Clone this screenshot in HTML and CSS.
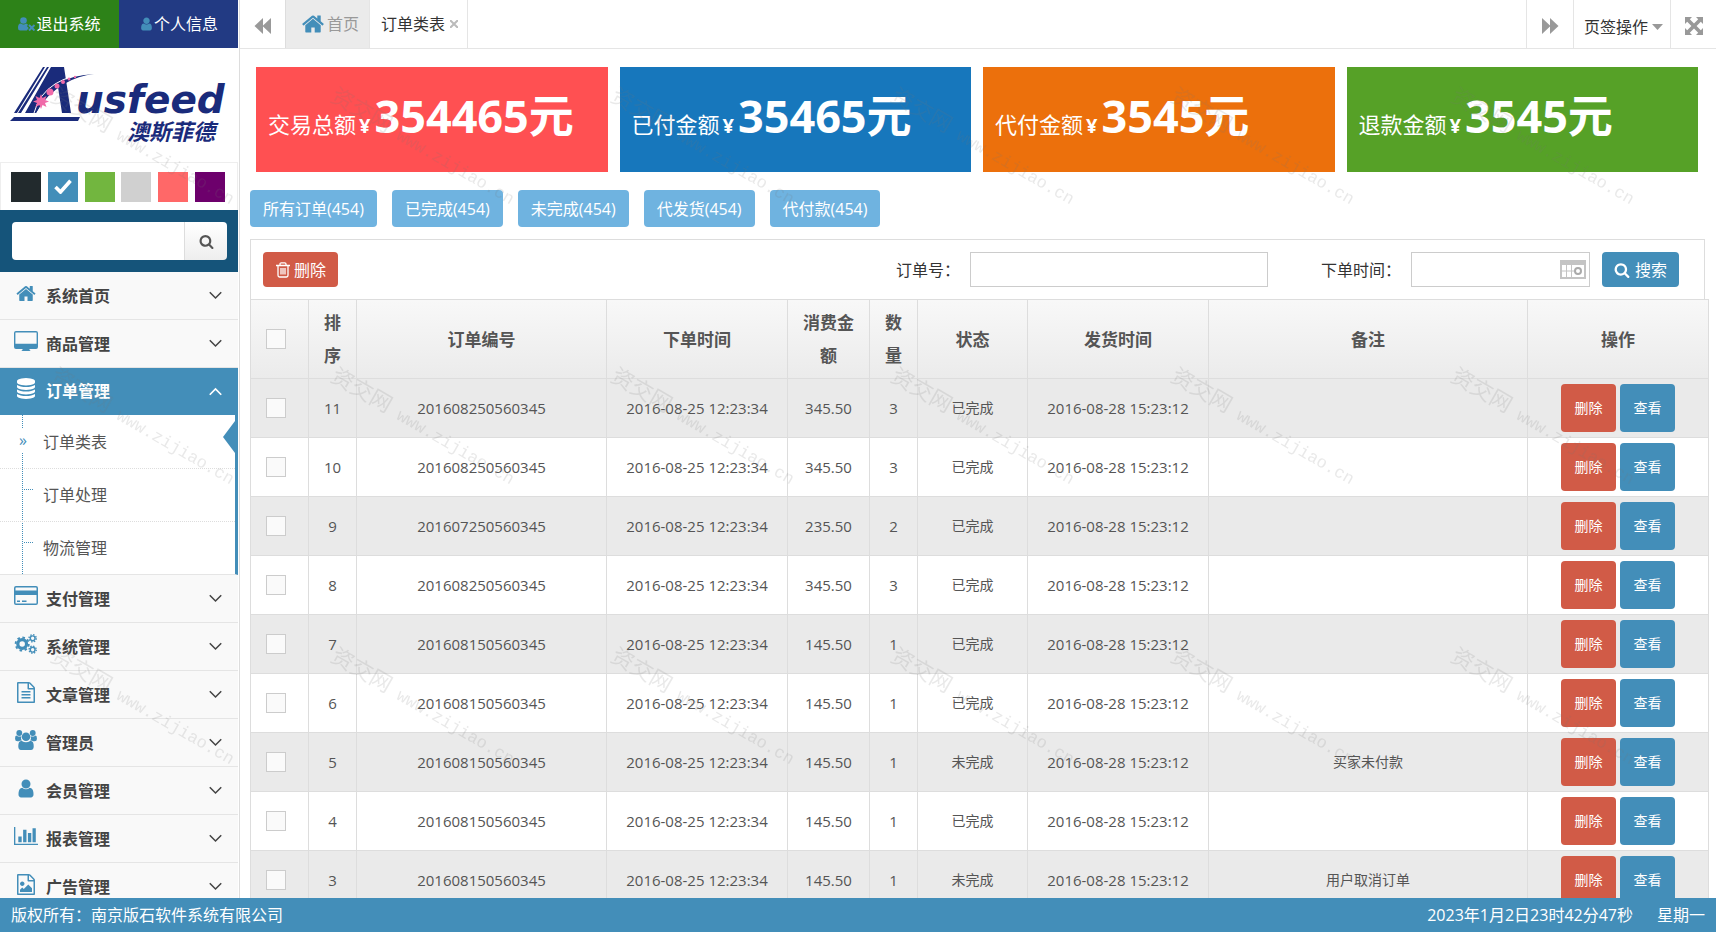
FILE: index.html
```html
<!DOCTYPE html>
<html lang="zh-CN">
<head>
<meta charset="utf-8">
<title>订单类表</title>
<link rel="stylesheet" href="styles.css">
</head>
<body>
<svg class="defs" aria-hidden="true">
<symbol id="home" viewBox="0 0 1792 1792"><path d="M1472 992v480q0 26-19 45t-45 19h-384v-384h-256v384h-384q-26 0-45-19t-19-45v-480q0-1 .5-3t.5-3l575-474 575 474q1 2 1 6zm223-69l-62 74q-8 9-21 11h-3q-13 0-21-7l-692-577-692 577q-12 8-24 7-13-2-21-11l-62-74q-8-10-7-23.5t11-21.5l719-599q32-26 76-26t76 26l244 204v-195q0-14 9-23t23-9h192q14 0 23 9t9 23v408l219 182q10 8 11 21.5t-7 23.5z"/></symbol>
<symbol id="search" viewBox="0 0 1792 1792"><path d="M1216 832q0-185-131.5-316.5t-316.5-131.5-316.5 131.5-131.5 316.5 131.5 316.5 316.5 131.5 316.5-131.5 131.5-316.5zm512 832q0 52-38 90t-90 38q-54 0-90-38l-343-342q-179 124-399 124-143 0-273.5-55.5t-225-150-150-225-55.5-273.5 55.5-273.5 150-225 225-150 273.5-55.5 273.5 55.5 225 150 150 225 55.5 273.5q0 220-124 399l343 343q37 37 37 90z"/></symbol>
<symbol id="user" viewBox="0 0 1792 1792"><path d="M1536 1399q0 109-62.5 187t-150.5 78h-854q-88 0-150.5-78t-62.5-187q0-85 8.5-160.5t31.5-152 58.5-131 94-89 134.5-34.5q131 128 313 128t313-128q76 0 134.5 34.5t94 89 58.5 131 31.5 152 8.5 160.5zm-256-887q0 159-112.5 271.5t-271.5 112.5-271.5-112.5-112.5-271.5 112.5-271.5 271.5-112.5 271.5 112.5 112.5 271.5z"/></symbol>
<symbol id="user-x" viewBox="0 0 18 14"><circle cx="5.500" cy="3.500" r="3.300"/><path d="M0 11q0-5 3-4.500 2.500 2 5 0 1.500 0 2 1.500L8.800 9l2 2-2 2.500H2.200Q0 13.500 0 11z"/><path d="M11 8l5.500 5.500M16.500 8L11 13.500" fill="none" stroke="currentColor" stroke-width="2"/></symbol>
<symbol id="database" viewBox="0 0 1792 1792"><path d="M896 768q237 0 443-43t325-127v170q0 69-103 128t-280 93.500-385 34.500-385-34.500-280-93.500-103-128v-170q119 84 325 127t443 43zm0 768q237 0 443-43t325-127v170q0 69-103 128t-280 93.500-385 34.500-385-34.500-280-93.500-103-128v-170q119 84 325 127t443 43zm0-384q237 0 443-43t325-127v170q0 69-103 128t-280 93.500-385 34.500-385-34.500-280-93.500-103-128v-170q119 84 325 127t443 43zm0-1152q208 0 385 34.500t280 93.500 103 128v128q0 69-103 128t-280 93.500-385 34.500-385-34.500-280-93.500-103-128v-128q0-69 103-128t280-93.500 385-34.500z"/></symbol>
<symbol id="doc" viewBox="0 0 1792 1792"><path d="M1596 380q28 28 48 76t20 88v1152q0 40-28 68t-68 28h-1344q-40 0-68-28t-28-68v-1600q0-40 28-68t68-28h896q40 0 88 20t76 48zm-444-244v376h376q-10-29-22-41l-313-313q-12-12-41-22zm384 1528v-1024h-416q-40 0-68-28t-28-68v-416h-768v1536h1280zm-1024-864q0-14 9-23t23-9h704q14 0 23 9t9 23v64q0 14-9 23t-23 9h-704q-14 0-23-9t-9-23v-64zm736 224q14 0 23 9t9 23v64q0 14-9 23t-23 9h-704q-14 0-23-9t-9-23v-64q0-14 9-23t23-9h704zm0 256q14 0 23 9t9 23v64q0 14-9 23t-23 9h-704q-14 0-23-9t-9-23v-64q0-14 9-23t23-9h704z"/></symbol>
<symbol id="picture" viewBox="0 0 1792 1792"><path d="M1596 380q28 28 48 76t20 88v1152q0 40-28 68t-68 28h-1344q-40 0-68-28t-28-68v-1600q0-40 28-68t68-28h896q40 0 88 20t76 48zm-444-244v376h376q-10-29-22-41l-313-313q-12-12-41-22zm384 1528v-1024h-416q-40 0-68-28t-28-68v-416h-768v1536h1280zm-128-448v320h-1024v-192l192-192 128 128 384-384zm-832-192q-80 0-136-56t-56-136 56-136 136-56 136 56 56 136-56 136-136 56z"/></symbol>
<symbol id="desktop" viewBox="0 0 24 20"><path fill-rule="evenodd" d="M2 0h20a2 2 0 0 1 2 2v14a2 2 0 0 1-2 2h-6.500v1q1 .3 1 1h-9q0-.7 1-1v-1H2a2 2 0 0 1-2-2V2a2 2 0 0 1 2-2zM1.400 1.800v11h21.200v-11l-.4-.4H1.800z"/></symbol>
<symbol id="card" viewBox="0 0 24 20"><path fill-rule="evenodd" d="M2 0h20a2 2 0 0 1 2 2v15a2 2 0 0 1-2 2H2a2 2 0 0 1-2-2V2a2 2 0 0 1 2-2zm0 1.500q-.5 0-.5.5v2.500h21V2q0-.5-.5-.5zM1.500 9v8q0 .5.500.5h20q.5 0 .5-.5V9zM3 14.500h3V16H3zm5 0h4.500V16H8z"/></symbol>
<symbol id="cogs" viewBox="0 0 24 21"><g fill="none" stroke="currentColor"><circle cx="8" cy="10.500" r="4.600" stroke-width="3.400"/><circle cx="8" cy="10.500" r="6.900" stroke-width="2" stroke-dasharray="2.700 2.719"/><circle cx="19" cy="4.500" r="2.500" stroke-width="1.500"/><circle cx="19" cy="4.500" r="3.800" stroke-width="1.400" stroke-dasharray="1.500 1.484"/><circle cx="19" cy="16.500" r="2.500" stroke-width="1.500"/><circle cx="19" cy="16.500" r="3.800" stroke-width="1.400" stroke-dasharray="1.500 1.484"/></g></symbol>
<symbol id="group" viewBox="0 0 24 22"><circle cx="4.600" cy="3.300" r="3.200"/><circle cx="19.400" cy="3.300" r="3.200"/><path d="M0 9q0-3.400 1.800-2.800 2.800 1.800 5 .6Q6 9.500 7.500 11.600 5 11.600 4 12.500H2.500Q0 12.500 0 10zM24 9q0-3.400-1.800-2.800-2.800 1.800-5 .6.800 2.700-.7 4.800 2.500 0 3.500.9h1.500q2.500 0 2.500-2.500z"/><circle cx="12" cy="7.500" r="4.700"/><path d="M3.500 18q0-6.500 4-6 4.500 3 9 0 4-.5 4 6 0 4-3 4h-11q-3 0-3-4z"/></symbol>
<symbol id="chart" viewBox="0 0 25 19"><path d="M0 0h1.400v17.500H25V19H0zM4.500 10H8v6H4.500zm5-7H13v13H9.500zm5 3.500H18V16h-3.500zm4.800-5h3.400V16h-3.400z"/></symbol>
<symbol id="down" viewBox="0 0 12 8"><path d="M.7 1L6 6.300 11.300 1" fill="none" stroke="currentColor" stroke-width="1.400"/></symbol>
<symbol id="up" viewBox="0 0 12 8"><path d="M.7 7L6 1.700 11.300 7" fill="none" stroke="currentColor" stroke-width="1.600"/></symbol>
<symbol id="trash" viewBox="0 0 14 16"><path d="M0 3.500h14M4 3.500V2q0-1.200 1.200-1.200h3.600Q10 .8 10 2v1.500M2 3.500v9.700Q2 15 3.500 15h7q1.500 0 1.500-1.800V3.500M5 6v6.500M7 6v6.500M9 6v6.500" fill="none" stroke="currentColor" stroke-width="1.300"/></symbol>
<symbol id="check" viewBox="0 0 18 15"><path d="M1.500 8l5 5L16.500 1.800" fill="none" stroke="currentColor" stroke-width="3.600"/></symbol>
<symbol id="expand" viewBox="0 0 18 18"><path d="M0 0h7L4.800 2.200 9 6.400l4.200-4.200L11 0h7v7l-2.200-2.200L11.600 9l4.200 4.200L18 11v7h-7l2.200-2.200L9 11.600l-4.200 4.200L7 18H0v-7l2.200 2.200L6.400 9 2.200 4.800 0 7z"/></symbol>
<symbol id="rew" viewBox="0 0 18 18"><path d="M9 1v7.500L17 1v16L9 9.500V17L.5 9z"/></symbol>
<symbol id="fwd" viewBox="0 0 18 18"><path d="M9 1v7.500L1 1v16L9 9.500V17L17.500 9z"/></symbol>
</svg>

<div class="app">
<aside class="side">
  <div class="account">
    <a class="logout" href="#"><svg class="i-out"><use href="#user-x"/></svg>退出系统</a>
    <a class="profile" href="#"><svg class="i-me"><use href="#user"/></svg>个人信息</a>
  </div>
  <a class="logo" href="#" aria-label="Ausfeed 澳斯菲德">
    <svg viewBox="0 0 238 114">
      <g fill="#1a2b7b">
        <path d="M43 19h2L17 65h-3zM47 19h2L21 65h-3zM51 19h13l7 46h-9l-4-26Q44 48 36 65H25z"/>
        <path d="M10 73l4-4h66l-2 4z"/>
        <path d="M94 26q-16 2-28 9-20 11-30 30h-3q8-20 24-30 17-8 37-9z"/>
        <text class="logo-en" x="76" y="65">usfeed</text>
        <text class="logo-cn" x="127" y="92">澳斯菲德</text>
      </g>
      <path d="M93 25q-24 2-38 11-16 10-21 29" fill="none" stroke="#fff" stroke-width="1"/>
      <g fill="#f06aa9"><path d="M41 46l1.500 4 4-2-1.500 4 4 1.500-4 1.500 1.500 4-4-2-1.500 4-1.500-4-4 2 1.500-4-4-1.500 4-1.500-1.500-4 4 2z"/><circle cx="50" cy="44" r="3.500"/><circle cx="57" cy="38" r="2.500"/><circle cx="63" cy="34" r="2"/><circle cx="69" cy="31" r="1.500"/><circle cx="75" cy="29" r="1.200"/></g>
    </svg>
  </a>
  <div class="palette">
    <button class="sw black" aria-label="黑"></button><button class="sw blue" aria-label="蓝"><svg><use href="#check"/></svg></button><button class="sw green" aria-label="绿"></button><button class="sw gray" aria-label="灰"></button><button class="sw red" aria-label="红"></button><button class="sw purple" aria-label="紫"></button>
  </div>
  <form class="finder"><input type="text" aria-label="搜索菜单"><button type="button" aria-label="搜索"><svg><use href="#search"/></svg></button></form>
  <nav class="menu">
    <a class="item" href="#"><svg class="ic"><use href="#home"/></svg><span>系统首页</span><svg class="arr"><use href="#down"/></svg></a>
    <a class="item" href="#"><svg class="ic wide"><use href="#desktop"/></svg><span>商品管理</span><svg class="arr"><use href="#down"/></svg></a>
    <a class="item open" href="#"><svg class="ic"><use href="#database"/></svg><span>订单管理</span><svg class="arr"><use href="#up"/></svg></a>
    <div class="sub">
      <a class="current" href="#">订单类表</a>
      <a href="#">订单处理</a>
      <a href="#">物流管理</a>
    </div>
    <a class="item" href="#"><svg class="ic wide"><use href="#card"/></svg><span>支付管理</span><svg class="arr"><use href="#down"/></svg></a>
    <a class="item" href="#"><svg class="ic wide"><use href="#cogs"/></svg><span>系统管理</span><svg class="arr"><use href="#down"/></svg></a>
    <a class="item" href="#"><svg class="ic"><use href="#doc"/></svg><span>文章管理</span><svg class="arr"><use href="#down"/></svg></a>
    <a class="item" href="#"><svg class="ic wide"><use href="#group"/></svg><span>管理员</span><svg class="arr"><use href="#down"/></svg></a>
    <a class="item" href="#"><svg class="ic"><use href="#user"/></svg><span>会员管理</span><svg class="arr"><use href="#down"/></svg></a>
    <a class="item" href="#"><svg class="ic wide"><use href="#chart"/></svg><span>报表管理</span><svg class="arr"><use href="#down"/></svg></a>
    <a class="item" href="#"><svg class="ic"><use href="#picture"/></svg><span>广告管理</span><svg class="arr"><use href="#down"/></svg></a>
  </nav>
</aside>

<main class="main">
  <div class="tabs">
    <button class="step first" aria-label="向左"><svg><use href="#rew"/></svg></button>
    <a class="tab home" href="#"><svg><use href="#home"/></svg>首页</a>
    <a class="tab now" href="#">订单类表<svg class="x" viewBox="0 0 8 8"><path d="M0 0l8 8M8 0L0 8" stroke="currentColor" stroke-width="2"/></svg></a>
    <button class="step end" aria-label="向右"><svg><use href="#fwd"/></svg></button>
    <button class="ops">页签操作<svg viewBox="0 0 11 6"><path d="M0 0h11L5.500 6z"/></svg></button>
    <button class="step" aria-label="全屏"><svg><use href="#expand"/></svg></button>
  </div>

  <section class="cards">
    <div class="card c1">交易总额<b>¥</b><strong>354465元</strong></div>
    <div class="card c2">已付金额<b>¥</b><strong>35465元</strong></div>
    <div class="card c3">代付金额<b>¥</b><strong>3545元</strong></div>
    <div class="card c4">退款金额<b>¥</b><strong>3545元</strong></div>
  </section>

  <div class="filters">
    <button>所有订单(454)</button><button>已完成(454)</button><button>未完成(454)</button><button>代发货(454)</button><button>代付款(454)</button>
  </div>

  <form class="tools">
    <button class="btn danger" type="button"><svg><use href="#trash"/></svg>删除</button>
    <label class="no" for="no">订单号：</label><input class="no-box" id="no" type="text">
    <label class="time" for="time">下单时间：</label>
    <span class="date"><input id="time" type="text"><svg viewBox="0 0 26 19"><path d="M0 0h26v19H0z" fill="#c4c4c4"/><path d="M2 5h22v12H2z" fill="#fff"/><path d="M2 11h14M6.500 5v12M11.500 5v12" stroke="#c4c4c4" stroke-width="1"/><circle cx="18" cy="11" r="3" fill="#fff" stroke="#aaa" stroke-width="2"/></svg></span>
    <button class="btn primary" type="button"><svg><use href="#search"/></svg>搜索</button>
  </form>

  <table class="orders">
    <colgroup><col class="w58"><col class="w48"><col class="w250"><col class="w181"><col class="w82"><col class="w48"><col class="w110"><col class="w181"><col class="w320"><col class="w181"></colgroup>
    <thead><tr><th><input type="checkbox" aria-label="全选"></th><th>排序</th><th>订单编号</th><th>下单时间</th><th>消费金额</th><th>数量</th><th>状态</th><th>发货时间</th><th>备注</th><th>操作</th></tr></thead>
    <tbody>
    <tr><td><input type="checkbox" aria-label="选择 11"></td><td>11</td><td>201608250560345</td><td>2016-08-25 12:23:34</td><td>345.50</td><td>3</td><td class="zh">已完成</td><td>2016-08-28 15:23:12</td><td class="zh"></td><td><div class="acts"><button class="del">删除</button><button class="view">查看</button></div></td></tr>
    <tr><td><input type="checkbox" aria-label="选择 10"></td><td>10</td><td>201608250560345</td><td>2016-08-25 12:23:34</td><td>345.50</td><td>3</td><td class="zh">已完成</td><td>2016-08-28 15:23:12</td><td class="zh"></td><td><div class="acts"><button class="del">删除</button><button class="view">查看</button></div></td></tr>
    <tr><td><input type="checkbox" aria-label="选择 9"></td><td>9</td><td>201607250560345</td><td>2016-08-25 12:23:34</td><td>235.50</td><td>2</td><td class="zh">已完成</td><td>2016-08-28 15:23:12</td><td class="zh"></td><td><div class="acts"><button class="del">删除</button><button class="view">查看</button></div></td></tr>
    <tr><td><input type="checkbox" aria-label="选择 8"></td><td>8</td><td>201608250560345</td><td>2016-08-25 12:23:34</td><td>345.50</td><td>3</td><td class="zh">已完成</td><td>2016-08-28 15:23:12</td><td class="zh"></td><td><div class="acts"><button class="del">删除</button><button class="view">查看</button></div></td></tr>
    <tr><td><input type="checkbox" aria-label="选择 7"></td><td>7</td><td>201608150560345</td><td>2016-08-25 12:23:34</td><td>145.50</td><td>1</td><td class="zh">已完成</td><td>2016-08-28 15:23:12</td><td class="zh"></td><td><div class="acts"><button class="del">删除</button><button class="view">查看</button></div></td></tr>
    <tr><td><input type="checkbox" aria-label="选择 6"></td><td>6</td><td>201608150560345</td><td>2016-08-25 12:23:34</td><td>145.50</td><td>1</td><td class="zh">已完成</td><td>2016-08-28 15:23:12</td><td class="zh"></td><td><div class="acts"><button class="del">删除</button><button class="view">查看</button></div></td></tr>
    <tr><td><input type="checkbox" aria-label="选择 5"></td><td>5</td><td>201608150560345</td><td>2016-08-25 12:23:34</td><td>145.50</td><td>1</td><td class="zh">未完成</td><td>2016-08-28 15:23:12</td><td class="zh">买家未付款</td><td><div class="acts"><button class="del">删除</button><button class="view">查看</button></div></td></tr>
    <tr><td><input type="checkbox" aria-label="选择 4"></td><td>4</td><td>201608150560345</td><td>2016-08-25 12:23:34</td><td>145.50</td><td>1</td><td class="zh">已完成</td><td>2016-08-28 15:23:12</td><td class="zh"></td><td><div class="acts"><button class="del">删除</button><button class="view">查看</button></div></td></tr>
    <tr><td><input type="checkbox" aria-label="选择 3"></td><td>3</td><td>201608150560345</td><td>2016-08-25 12:23:34</td><td>145.50</td><td>1</td><td class="zh">未完成</td><td>2016-08-28 15:23:12</td><td class="zh">用户取消订单</td><td><div class="acts"><button class="del">删除</button><button class="view">查看</button></div></td></tr>
    </tbody>
  </table>
</main>
</div>
<footer class="foot"><span>版权所有：南京版石软件系统有限公司</span><span class="clock">2023年1月2日23时42分47秒</span><span>星期一</span></footer>

<div class="marks" aria-hidden="true">
<p><i>资交网</i> www.zijiao.cn</p><p><i>资交网</i> www.zijiao.cn</p><p><i>资交网</i> www.zijiao.cn</p><p><i>资交网</i> www.zijiao.cn</p><p><i>资交网</i> www.zijiao.cn</p><p><i>资交网</i> www.zijiao.cn</p>
<p><i>资交网</i> www.zijiao.cn</p><p><i>资交网</i> www.zijiao.cn</p><p><i>资交网</i> www.zijiao.cn</p><p><i>资交网</i> www.zijiao.cn</p><p><i>资交网</i> www.zijiao.cn</p><p><i>资交网</i> www.zijiao.cn</p>
<p><i>资交网</i> www.zijiao.cn</p><p><i>资交网</i> www.zijiao.cn</p><p><i>资交网</i> www.zijiao.cn</p><p><i>资交网</i> www.zijiao.cn</p><p><i>资交网</i> www.zijiao.cn</p><p><i>资交网</i> www.zijiao.cn</p>
</div>
</body>
</html>
```
FILE: styles.css
```css
* { box-sizing: border-box; }
body {
  margin: 0; height: 100vh; display: flex; flex-direction: column; overflow: hidden;
  background: #fff; color: #333;
  font: 16px/24px "Open Sans", "Noto Sans CJK SC", sans-serif;
}
a { color: inherit; text-decoration: none; }
button, input { font: inherit; color: inherit; margin: 0; }
button { border: 0; padding: 0; background: none; cursor: pointer; }
svg { fill: currentColor; display: block; flex: none; }
.defs { position: absolute; width: 0; height: 0; }

.app { flex: 1; min-height: 0; display: flex; overflow: hidden; }
.side { width: 240px; flex: none; padding-right: 1px; border-right: 1px solid #ddd; }
.main { flex: 1; min-width: 0; }

.account { display: flex; height: 48px; }
.account a { flex: 1; display: flex; align-items: center; justify-content: center; color: #fff; }
.account svg { color: #438eb9; }
.logout { background: #2d8218; }
.profile { background: #223a83; }
.i-out { width: 18px; height: 14px; }
.i-me { width: 15px; height: 16px; }
.logo { display: block; height: 114px; }
.logo svg { width: 238px; height: 114px; }
.logo-en { font: italic bold 39px "DejaVu Sans", sans-serif; }
.logo-cn { font: italic bold 22px "Noto Sans CJK SC", sans-serif; }
.palette { height: 48px; display: flex; justify-content: space-between; align-items: center; padding: 0 12px 0 10px; border: 1px solid #eee; border-bottom: 0; }
.sw { width: 30px; height: 30px; display: grid; place-items: center; color: #fff; }
.sw svg { width: 18px; height: 15px; }
.black { background: #222a2d; } .blue { background: #438eb9; } .green { background: #72b63f; }
.gray { background: #d0d0d0; } .red { background: #ff6868; } .purple { background: #6d006c; }
.finder { height: 62px; background: #15547a; padding: 12px 11px 12px 12px; display: flex; }
.finder input { flex: 1; min-width: 0; border: 0; background: #fff; border-radius: 4px 0 0 4px; padding: 0 8px; }
.finder button { width: 43px; border-left: 1px solid #ddd; border-radius: 0 4px 4px 0; background: linear-gradient(#fff, #eee); display: grid; place-items: center; color: #555; }
.finder svg { width: 15px; height: 15px; }

.item { height: 48px; display: flex; align-items: center; padding: 0 16px 0 14px; background: #f9f9f9; border-bottom: 1px solid #e5e5e5; color: #444; font-weight: bold; }
.item span { flex: 1; margin-left: 8px; }
.ic { width: 24px; height: 21px; color: #438eb9; margin-bottom: 5px; }
.ic.wide { height: 20px; }
.arr { width: 13px; height: 9px; }
.item.open { background: #438eb9; border-color: #438eb9; color: #fff; height: 47px; }
.item.open .ic { color: #fff; }
.sub { position: relative; border-right: 3px solid #438eb9; border-bottom: 1px solid #e5e5e5; background: #fff; }
.sub::before { content: ""; position: absolute; left: 22px; top: 0; bottom: 0; border-left: 1px dotted #438eb9; }
.sub a { position: relative; display: flex; align-items: center; height: 53px; padding-left: 43px; color: #555; }
.sub a + a { border-top: 1px dotted #ddd; }
.sub a::before { content: ""; position: absolute; left: 24px; top: 20px; width: 9px; border-top: 1px dotted #438eb9; }
.sub .current::before { content: "»"; left: 16px; top: 14px; border: 0; background: #fff; width: 14px; height: 24px; line-height: 22px; text-align: center; color: #438eb9; }
.sub .current::after { content: ""; position: absolute; right: 0; top: 6px; border: solid transparent; border-width: 16px 12px 16px 0; border-right-color: #438eb9; }

.tabs { height: 49px; display: flex; border-bottom: 1px solid #e5e5e5; color: #333; }
.step { width: 45px; display: grid; place-items: center; padding-top: 4px; color: #999; }
.step svg { width: 18px; height: 18px; }
.tab { display: flex; align-items: center; border-right: 1px solid #e5e5e5; }
.tab.home { background: #ebebeb; border-left: 1px solid #ddd; padding: 0 10px 0 15px; color: #999; }
.tab.home svg { width: 24px; height: 24px; color: #438eb9; margin-right: 2px; }
.tab.now { padding: 0 9px 0 11px; }
.x { width: 8px; height: 8px; margin-left: 5px; color: #bbb; }
.end { width: 47px; margin-left: auto; border-left: 1px solid #e5e5e5; }
.ops { display: flex; align-items: center; gap: 4px; padding: 6px 7px 0 10px; border: solid #e5e5e5; border-width: 0 1px; }
.ops svg { width: 11px; height: 6px; color: #999; }

.cards { display: grid; grid-template-columns: repeat(4, 1fr); gap: 12px; padding: 18px 18px 0 16px; }
.card { height: 105px; padding: 25px 0 0 12px; display: flex; align-items: baseline; color: #fff; font-size: 22px; line-height: 48px; white-space: nowrap; }
.card b { margin: 0 4px 0 3px; font-size: 20px; }
.card strong { font-size: 45px; }
.c1 { background: #ff5052; } .c2 { background: #1777bc; } .c3 { background: #ec700c; } .c4 { background: #56a127; }

.filters { display: flex; gap: 15px; padding: 18px 10px 0; }
.filters button { height: 37px; padding: 0 13px; border-radius: 4px; background: #6fb3e0; color: #fff; }

.tools { margin: 12px 11px 0 10px; height: 60px; padding: 0 25px 0 12px; border: 1px solid #ddd; border-bottom: 0; display: flex; align-items: center; }
.btn { height: 35px; display: flex; align-items: center; gap: 3px; padding: 0 12px; border-radius: 4px; color: #fff; }
.btn svg { width: 16px; height: 16px; }
.danger { background: #d15b47; }
.primary { background: #438eb9; gap: 5px; }
.tools input { height: 35px; border: 1px solid #ccc; background: #fff; padding: 0 6px; }
.no { margin-left: auto; margin-right: 10px; }
.no-box { width: 298px; }
.time { margin-left: 53px; margin-right: 10px; }
.date { position: relative; width: 179px; margin-right: 12px; }
.date input { width: 100%; display: block; }
.date svg { position: absolute; right: 4px; top: 8px; width: 26px; height: 19px; }

.orders { width: calc(100% - 17px); margin-left: 10px; table-layout: fixed; border-collapse: collapse; text-align: center; font-size: 15px; color: #555; }
.w48 { width: 48px; } .w58 { width: 58px; } .w82 { width: 82px; } .w110 { width: 110px; }
.w181 { width: 181px; } .w250 { width: 250px; }
.orders th, .orders td { border: 1px solid #ddd; padding: 5px 8px; }
.orders th { height: 79px; font-size: 17px; line-height: 33px; }
.orders thead tr { background: linear-gradient(#f8f8f8, #ebebeb); }
.orders tbody tr:nth-child(odd) { background: #eaeaea; }
.orders .zh { font-size: 14px; }
.orders input { appearance: none; display: block; margin: 0 auto 0 7px; width: 20px; height: 20px; border: 1px solid #ccc; background: #fafafa; }
.acts { display: flex; justify-content: center; gap: 4px; }
.acts button { width: 55px; height: 48px; border-radius: 4px; color: #fff; font-size: 14px; }
.del { background: #d15b47; } .view { background: #438eb9; }

.foot { height: 34px; flex: none; display: flex; align-items: center; padding: 0 11px; gap: 24px; background: #438eb9; color: #fff; }
.clock { margin-left: auto; }

.marks { position: fixed; inset: 0; overflow: hidden; pointer-events: none; padding: 84px 0 0 52px; display: grid; grid-template-columns: repeat(6, 280px); grid-auto-rows: 280px; }
.marks p { margin: 0; width: 240px; height: 24px; transform: rotate(30deg); transform-origin: 0 12px; font: 17px/24px "Liberation Mono", "Noto Sans CJK SC", monospace; color: rgba(120, 120, 120, .16); white-space: nowrap; }
.marks i { font-style: normal; font-size: 22px; }
```
